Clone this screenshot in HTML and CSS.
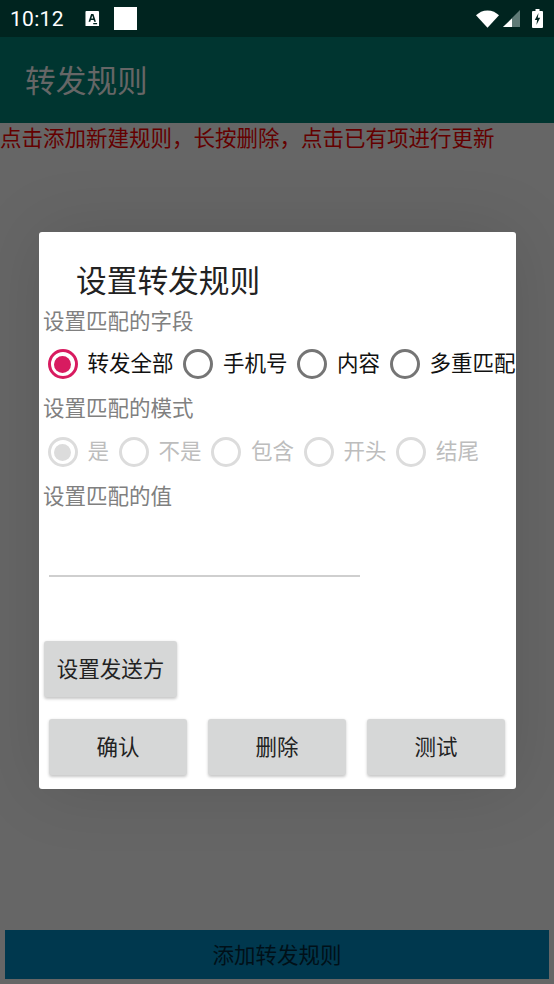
FILE: index.html
```html
<!DOCTYPE html>
<html lang="zh-CN">
<head>
<meta charset="utf-8">
<title>转发规则</title>
<link rel="stylesheet" href="styles.css">
</head>
<body>
<div class="screen">
  <div class="status">
    <span class="time">10:12</span>
    <svg class="ic-a" viewBox="0 0 14 16"><path fill="#fff" d="M1 0h12a1 1 0 0 1 1 1v14a1 1 0 0 1-1 1H1a1 1 0 0 1-1-1V1a1 1 0 0 1 1-1z"/><path fill="#00241f" d="M5.800 3h2.400l2.600 8H9l-.5-1.700h-3L5 11H3.200zM6 7.800h2L7 4.700zM8 12.500h4v1.200H8z"/></svg>
    <span class="sq"></span>
    <span class="grow"></span>
    <svg class="ic-wifi" viewBox="0 0 24 18"><path fill="#fff" d="M0 5.200C3 2 7.200 0 12 0s9 2 12 5.200L12 18z"/></svg>
    <svg class="ic-sig" viewBox="0 0 17 17"><path fill="#5f7a76" d="M17 0v17H0z"/><path fill="#fff" d="M9 8.500V17H0z"/></svg>
    <svg class="ic-bat" viewBox="0 0 11 19"><path fill="#fff" d="M3.500 0h4v2H10a1 1 0 0 1 1 1v15a1 1 0 0 1-1 1H1a1 1 0 0 1-1-1V3a1 1 0 0 1 1-1h2.500z"/><path fill="#00241f" d="M6.500 4 2.800 11h2.300l-.7 5 3.800-7.300H5.800z"/></svg>
  </div>
  <div class="appbar">转发规则</div>
  <div class="hint">点击添加新建规则，长按删除，点击已有项进行更新</div>
  <div class="grow"></div>
  <div class="addbtn">添加转发规则</div>
</div>

<div class="dialog">
  <div class="title">设置转发规则</div>
  <div class="label">设置匹配的字段</div>
  <div class="radios r1">
    <div class="opt on"><span class="radio"></span><span class="txt">转发全部</span></div>
    <div class="opt"><span class="radio"></span><span class="txt">手机号</span></div>
    <div class="opt"><span class="radio"></span><span class="txt">内容</span></div>
    <div class="opt"><span class="radio"></span><span class="txt">多重匹配</span></div>
  </div>
  <div class="label">设置匹配的模式</div>
  <div class="radios r2">
    <div class="opt on"><span class="radio"></span><span class="txt">是</span></div>
    <div class="opt"><span class="radio"></span><span class="txt">不是</span></div>
    <div class="opt"><span class="radio"></span><span class="txt">包含</span></div>
    <div class="opt"><span class="radio"></span><span class="txt">开头</span></div>
    <div class="opt"><span class="radio"></span><span class="txt">结尾</span></div>
  </div>
  <div class="label">设置匹配的值</div>
  <div class="field"></div>
  <div class="btn sender">设置发送方</div>
  <div class="actions">
    <div class="btn">确认</div>
    <div class="btn">删除</div>
    <div class="btn">测试</div>
  </div>
</div>
</body>
</html>
```
FILE: styles.css
```css
* { box-sizing: border-box; }
html, body { margin: 0; padding: 0; }
body {
  width: 554px;
  height: 984px;
  overflow: hidden;
  position: relative;
  background: #666;
  font-family: "Noto Sans CJK SC", "Noto Sans", sans-serif;
  font-size: 21.500px;
}
.screen { display: flex; flex-direction: column; height: 984px; }
.grow { flex: 1; }
.status {
  height: 37px;
  background: #00241f;
  display: flex;
  align-items: center;
  padding: 0 10px;
  color: #fff;
}
.time { font-family: Roboto, sans-serif; font-size: 21px; letter-spacing: .3px; width: 50px; flex: none; }
.ic-a { width: 14.500px; height: 15.500px; margin-left: 25px; }
.sq { width: 23px; height: 23px; background: #fff; margin-left: 14.500px; }
.ic-wifi { width: 23px; height: 18px; }
.ic-sig { width: 17px; height: 17px; margin-left: 4px; }
.ic-bat { width: 11px; height: 19px; margin-left: 12px; margin-right: 1px; }
.appbar {
  height: 86px;
  background: #003530;
  color: #666;
  font-size: 30.700px;
  line-height: 83px;
  padding-left: 25px;
}
.hint { color: #640000; line-height: 28px; padding-bottom: 2px; }
.addbtn {
  height: 49px;
  margin: 0 5px 5px;
  background: #00384e;
  color: #001018;
  line-height: 47px;
  text-align: center;
}
.dialog {
  position: absolute;
  left: 38.500px;
  top: 232px;
  width: 477px;
  height: 557px;
  background: #fff;
  border-radius: 3px;
  overflow: hidden;
  padding: 30px 0 14px;
  box-shadow: 0 0 70px rgba(0, 0, 0, .12);
}
.title { color: #222; font-size: 30.700px; line-height: 34px; padding: 0 0 4px 37.500px; }
.label { color: #808080; line-height: 28px; padding: 0 0 2px 4.500px; margin-top: 14px; }
.title + .label { margin-top: 6px; }
.radios { display: flex; margin-top: 13px; padding-left: 9px; white-space: nowrap; }
.r2 { margin-top: 14px; color: #bdbdbd; }
.r1 { color: #111; }
.opt { display: flex; align-items: center; gap: 10px; height: 30px; margin-right: 9.500px; }
.txt { line-height: 26px; padding-bottom: 4px; }
.radio {
  flex: none;
  position: relative;
  width: 30px;
  height: 30px;
  border: 3px solid #757575;
  border-radius: 50%;
}
.r2 .radio { border-color: #dcdcdc; }
.r1 .on .radio { border-color: #d81b60; }
.on .radio::after {
  content: "";
  position: absolute;
  left: 3.500px;
  top: 3.500px;
  width: 17px;
  height: 17px;
  border-radius: 50%;
  background: #d81b60;
}
.r2 .on .radio::after { background: #dcdcdc; }
.field { width: 311px; height: 2px; margin: 64px 0 0 10.500px; background: #cfcfcf; }
.btn {
  height: 56px;
  line-height: 53px;
  text-align: center;
  background: #d6d7d7;
  color: #222;
  border-radius: 3px;
  box-shadow: 0 1.500px 3px rgba(0, 0, 0, .22);
}
.sender { width: 133px; margin: 64px 0 0 5.500px; }
.actions { display: flex; gap: 21px; margin: 22px 0 0 10.500px; }
.actions .btn { width: 138px; }
```
